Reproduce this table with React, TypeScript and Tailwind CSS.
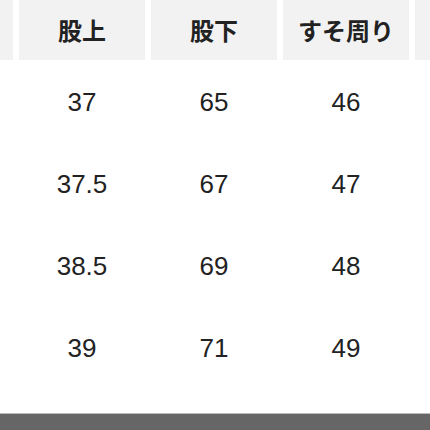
import React from 'react';

const headers = ['', '股上', '股下', 'すそ周り', ''];
const rows = [
  ['', '37', '65', '46', ''],
  ['', '37.5', '67', '47', ''],
  ['', '38.5', '69', '48', ''],
  ['', '39', '71', '49', ''],
];

export default function App() {
  return (
    <div className="w-[430px] h-[430px] bg-white overflow-hidden flex flex-col">
      <div className="flex gap-[6px] ml-[-113px] shrink-0">
        {headers.map((h, i) => (
          <div
            key={i}
            className="w-[126px] shrink-0 h-[60px] bg-[#f3f2f2] flex items-center justify-center pb-[1px] text-[24px] font-bold text-[#222] font-['Noto_Sans_CJK_JP',sans-serif]"
          >
            {h}
          </div>
        ))}
      </div>
      <div className="flex flex-col pt-[1px]">
        {rows.map((r, ri) => (
          <div key={ri} className="flex gap-[6px] ml-[-113px] h-[82px]">
            {r.map((c, ci) => (
              <div
                key={ci}
                className="w-[126px] shrink-0 flex items-center justify-center text-[26px] text-[#222] font-['Liberation_Sans',Arial,sans-serif]"
              >
                {c}
              </div>
            ))}
          </div>
        ))}
      </div>
      <div className="flex-1" />
      <div className="h-[17px] bg-[#666] border-t border-[#bbb] shrink-0" />
    </div>
  );
}
